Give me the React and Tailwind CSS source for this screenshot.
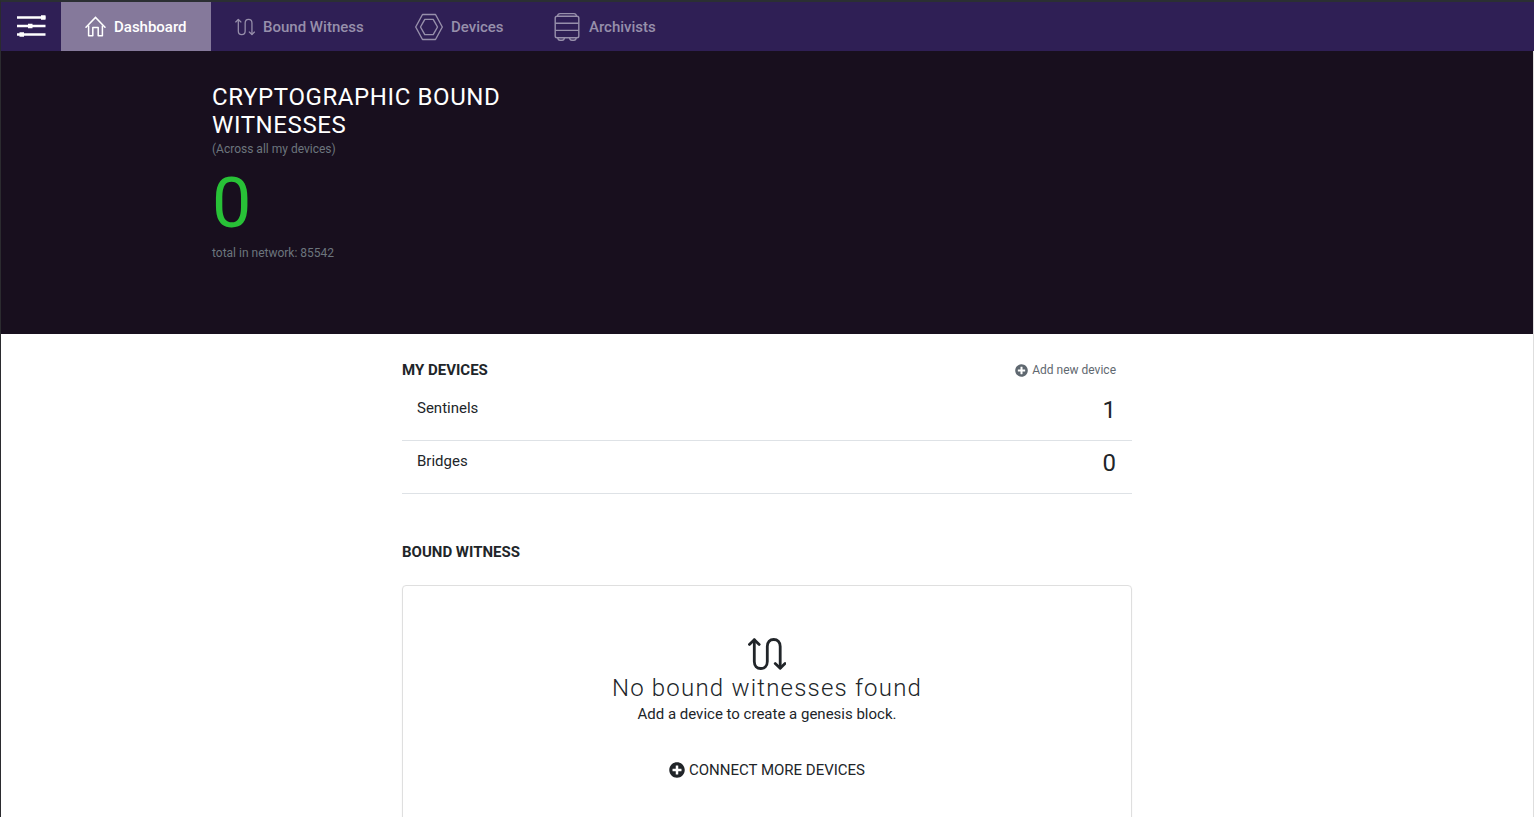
import React from 'react';
import { FaPlusCircle } from 'react-icons/fa';

function MenuIcon() {
  return (
    <svg width="30" height="24" viewBox="0 0 30 24" fill="none" stroke="currentColor" strokeWidth="2.4" aria-hidden="true">
      <path d="M1 2.5H29.5M1 11H29.5M1 19.5H29.5" />
      <path d="M25 2.5h4.5M12 11h4.5M3.5 19.5H8" strokeWidth="4.6" />
    </svg>
  );
}

function HomeIcon() {
  return (
    <svg width="21" height="21" viewBox="0 0 21 21" fill="none" stroke="currentColor" strokeWidth="1.5" aria-hidden="true">
      <path d="M1 11.2 10.5 1.4 20 11.2" strokeLinecap="round" />
      <path d="M3.6 9.5v10.2h4.2v-8.2h5.4v8.2h4.2V9.5" strokeLinejoin="round" />
    </svg>
  );
}

function WitnessIcon({ width, height, stroke }) {
  return (
    <svg width={width} height={height} viewBox="0 0 38 32" fill="none" stroke="currentColor" strokeWidth={stroke} strokeLinecap="round" strokeLinejoin="round" aria-hidden="true">
      <path d="M6.3 2V23.5C6.3 28 9 30.5 12.7 30.5S19.3 28 19.3 23.5V8.5C19.3 4 22 1.5 25.7 1.5S32.2 4 32.2 8.5V30" />
      <path d="M1.4 6.4 6.3 1.7 11.2 6.4M27.2 25.6 32.2 30.3 37 25.6" />
    </svg>
  );
}

function DeviceIcon() {
  return (
    <svg width="28" height="28" viewBox="0 0 28 28" fill="none" stroke="currentColor" strokeWidth="1.4" strokeLinejoin="round" aria-hidden="true">
      <path d="M7.5 1.5h13L27.3 14l-6.8 12.5h-13L.7 14z" />
      <path d="M9.8 6.4h8.4l4.3 7.6-4.3 7.6H9.8L5.5 14z" />
    </svg>
  );
}

function ArchivistIcon() {
  return (
    <svg width="28" height="30" viewBox="0 0 28 30" fill="none" stroke="currentColor" strokeWidth="1.4" strokeLinejoin="round" aria-hidden="true">
      <path d="M4.5 4C4.8 2.2 5.6 1.6 7 1.6h14c1.4 0 2.2.6 2.5 2.4" />
      <rect x="2.2" y="4.3" width="23.6" height="21.4" rx="1.8" />
      <path d="M2.2 11.3h23.6M2.2 18.4h23.6" />
      <path d="M4.8 25.8c.2 1.7 1 2.4 2.2 2.4h2.2c1.2 0 2-.7 2.2-2.4M16.6 25.8c.2 1.7 1 2.4 2.2 2.4H21c1.2 0 2-.7 2.2-2.4" />
    </svg>
  );
}

function NavItem({ icon, label, active, width }) {
  return (
    <a
      href="#"
      aria-current={active ? 'page' : undefined}
      className={`flex items-center gap-2 pl-6 font-medium whitespace-nowrap ${width} ${
        active ? 'bg-[#85799b] text-white' : 'text-[#978fab]'
      }`}
    >
      {icon}
      <span className="pt-0.5">{label}</span>
    </a>
  );
}

function DeviceRow({ label, count }) {
  return (
    <li className="flex items-start justify-between border-b border-[#dee2e6] pt-2 pr-4 pb-4 pl-[15px]">
      <span className="leading-6">{label}</span>
      <span className="text-2xl leading-7">{count}</span>
    </li>
  );
}

export default function App() {
  return (
    <div className="h-screen overflow-hidden border-t-2 border-l border-t-[#2b2f33] border-l-[#2b2b2f] bg-white font-[Roboto,'Open_Sans',sans-serif] text-[15px] text-[#212529]">
      <nav className="flex h-[49px] bg-[#2f1f55]">
        <button type="button" aria-label="Menu" className="flex w-[60px] items-center justify-center text-white">
          <MenuIcon />
        </button>
        <NavItem active label="Dashboard" icon={<HomeIcon />} width="w-[150px]" />
        <NavItem label="Bound Witness" icon={<WitnessIcon width={20} height={18} stroke={2.4} />} width="w-[180px]" />
        <NavItem label="Devices" icon={<DeviceIcon />} width="w-[138px]" />
        <NavItem label="Archivists" icon={<ArchivistIcon />} width="w-[151px]" />
      </nav>

      <div className="border-r border-[#dedede]">
        <header className="bg-[#180f1e] pt-8 pb-[71px]">
          <div className="mx-auto max-w-[1140px] px-[15px]">
            <div className="max-w-[350px]">
              <h1 className="text-2xl leading-7 tracking-wide text-white uppercase">Cryptographic Bound Witnesses</h1>
              <p className="text-xs leading-5 text-[#6c757d]">(Across all my devices)</p>
              <p className="pt-1 text-[70px] leading-[80px] text-[#28c137]">0</p>
              <p className="text-xs leading-5 text-[#6c757d]">total in network: 85542</p>
            </div>
          </div>
        </header>

        <main className="mx-auto max-w-[730px] pt-6">
          <section>
            <div className="flex items-center justify-between pr-4">
              <h2 className="leading-6 font-bold uppercase">My Devices</h2>
              <a href="#" className="flex items-center gap-1 text-xs leading-6 text-[#5f6870]">
                <FaPlusCircle size={13} />
                Add new device
              </a>
            </div>
            <ul className="pt-1.5">
              <DeviceRow label="Sentinels" count={1} />
              <DeviceRow label="Bridges" count={0} />
            </ul>
          </section>

          <section className="pt-[46px]">
            <h2 className="leading-6 font-bold uppercase">Bound Witness</h2>
            <div className="mt-[21px] flex flex-col items-center rounded border border-[#dfdfdf] pt-[52px] pb-16 text-center shadow-xs">
              <WitnessIcon width={38} height={32} stroke={2.8} />
              <h3 className="pt-1 text-2xl leading-7 font-light tracking-wider">No bound witnesses found</h3>
              <p className="leading-6">Add a device to create a genesis block.</p>
              <button type="button" className="mt-8 flex items-center gap-1 leading-6 uppercase">
                <FaPlusCircle size={16} />
                Connect more devices
              </button>
            </div>
          </section>
        </main>
      </div>
    </div>
  );
}
